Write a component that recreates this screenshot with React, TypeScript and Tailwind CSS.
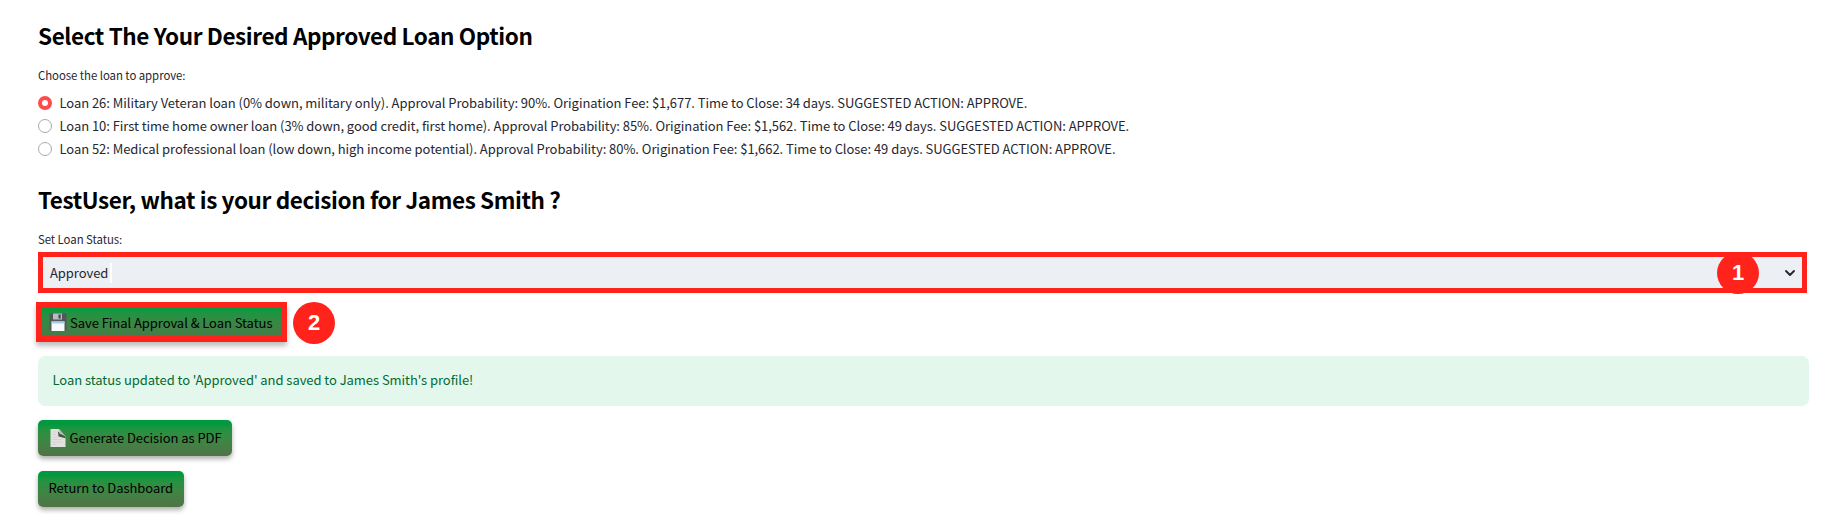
import { useState } from "react";
import type { ReactNode } from "react";

const loans = [
  "Loan 26: Military Veteran loan (0% down, military only). Approval Probability: 90%. Origination Fee: $1,677. Time to Close: 34 days. SUGGESTED ACTION: APPROVE.",
  "Loan 10: First time home owner loan (3% down, good credit, first home). Approval Probability: 85%. Origination Fee: $1,562. Time to Close: 49 days. SUGGESTED ACTION: APPROVE.",
  "Loan 52: Medical professional loan (low down, high income potential). Approval Probability: 80%. Origination Fee: $1,662. Time to Close: 49 days. SUGGESTED ACTION: APPROVE.",
];

function Heading({ children }: { children: ReactNode }) {
  return (
    <h3 className="h-[30px] whitespace-nowrap text-[22.5px] leading-[30px] font-semibold tracking-[-0.4px] text-black">
      {children}
    </h3>
  );
}

function Marker({ label }: { label: string }) {
  return (
    <span className="flex size-[42px] items-center justify-center rounded-full bg-[#ff231c] font-['Liberation_Sans',sans-serif] text-[22px] leading-none font-bold tracking-normal text-white">
      {label}
    </span>
  );
}

function ActionButton({ icon, children }: { icon?: ReactNode; children: ReactNode }) {
  return (
    <button className="flex h-9 items-center gap-[3px] rounded-[5px] bg-linear-to-b from-[#00993f] from-12% to-[#507346] px-[10.5px] whitespace-nowrap text-black shadow-[0_3px_5px_rgba(0,0,0,0.32)]">
      {icon}
      <span className={icon ? "-mt-px" : "-mt-[3px]"}>{children}</span>
    </button>
  );
}

function FloppyIcon() {
  return (
    <svg width="18" height="18" viewBox="0 0 18 18">
      <path d="M.5.500h17V18H2L.5 16.500z" fill="#55565a" />
      <path d="M4 .5h9v6H4z" fill="#b9bcc0" />
      <path d="M9.500 1.500h2.200v4H9.500z" fill="#46474b" />
      <path d="M2.500 8.500h13V18h-13z" fill="#f6fafc" />
      <path d="M2.500 8.500h13v2h-13z" fill="#9fd0e8" />
    </svg>
  );
}

function PageIcon() {
  return (
    <svg width="18" height="18" viewBox="0 0 18 18">
      <path d="M1.500 0H10l6.500 7.500V18h-15z" fill="#e1e2e0" />
      <path d="M9 2.500l7.500 5v1.700L9.500 7.500z" fill="#4b524c" />
      <path d="M9 0c1.500 1.500 1.800 3 1.500 5 2 0 4.500.8 6 2.800L10 0z" fill="#b8bab8" />
      <path d="M3.500 3h4M3.500 5.500h4M3.500 8h5M3.500 10.500h10M3.500 13h10M3.500 15.500h4" stroke="#cccdcb" strokeWidth="0.7" />
    </svg>
  );
}

export default function App() {
  const [selected, setSelected] = useState(0);
  return (
    <main className="h-[515px] w-full overflow-hidden bg-white pt-5 pr-8 pl-[38px] font-['Noto_Sans_CJK_SC',sans-serif] text-[13px] tracking-[-0.052px] text-[#262730]">
      <Heading>Select The Your Desired Approved Loan Option</Heading>
      <p className="mt-[15px] h-5 text-[11.4px] leading-5 tracking-[-0.05px]">Choose the loan to approve:</p>
      <div className="mt-[6px] flex flex-col">
        {loans.map((loan, i) => (
          <label key={loan} className="flex h-[23px] items-center gap-[7.5px] whitespace-nowrap">
            <input
              type="radio"
              name="loan"
              className="sr-only"
              checked={selected === i}
              onChange={() => setSelected(i)}
            />
            {selected === i ? (
              <span className="flex size-[14px] shrink-0 items-center justify-center rounded-full bg-[#ff4b4b]">
                <span className="size-[6px] rounded-full bg-white" />
              </span>
            ) : (
              <span className="size-[14px] shrink-0 rounded-full border border-[#a8a9ae] bg-white" />
            )}
            <span>{loan}</span>
          </label>
        ))}
      </div>
      <div className="mt-[24px]">
        <Heading>TestUser, what is your decision for James Smith ?</Heading>
      </div>
      <p className="mt-[15px] h-5 text-[11.4px] leading-5 tracking-[-0.05px]">Set Loan Status:</p>
      <div className="relative mt-[3px] mr-[2px] flex h-[41px] items-center border-[5px] border-[#ff231c] bg-[#eceff4] pl-[7px]">
        <span>Approved</span>
        <span className="ml-[2px] h-5 w-[2px] bg-white" />
        <svg className="mr-[6px] ml-auto" width="12" height="8" viewBox="0 0 12 8" fill="none">
          <path d="M2 2l4 4 4-4" stroke="#262730" strokeWidth="1.9" strokeLinecap="round" strokeLinejoin="round" />
        </svg>
        <div className="absolute top-[-5px] right-[43px]">
          <Marker label="1" />
        </div>
      </div>
      <div className="mt-[9px] -ml-[2px] flex h-[42px] items-start gap-[6px]">
        <button className="flex h-10 w-[251px] items-center gap-[3px] border-[6px] border-[#ff231c] bg-linear-to-b from-[#00993f] to-[#477a48] px-[7px] whitespace-nowrap text-black shadow-[0_4px_5px_rgba(0,0,0,0.25)]">
          <FloppyIcon />
          <span className="pt-[2px]">Save Final Approval &amp; Loan Status</span>
        </button>
        <Marker label="2" />
      </div>
      <div className="mt-3 flex h-[50px] items-center rounded-[7px] bg-[#e4f7ec] pb-[2px] pl-[14.5px] text-[#006b32]">
        Loan status updated to 'Approved' and saved to James Smith's profile!
      </div>
      <div className="mt-[14px] flex flex-col items-start gap-[15px]">
        <ActionButton icon={<PageIcon />}>Generate Decision as PDF</ActionButton>
        <ActionButton>Return to Dashboard</ActionButton>
      </div>
    </main>
  );
}
